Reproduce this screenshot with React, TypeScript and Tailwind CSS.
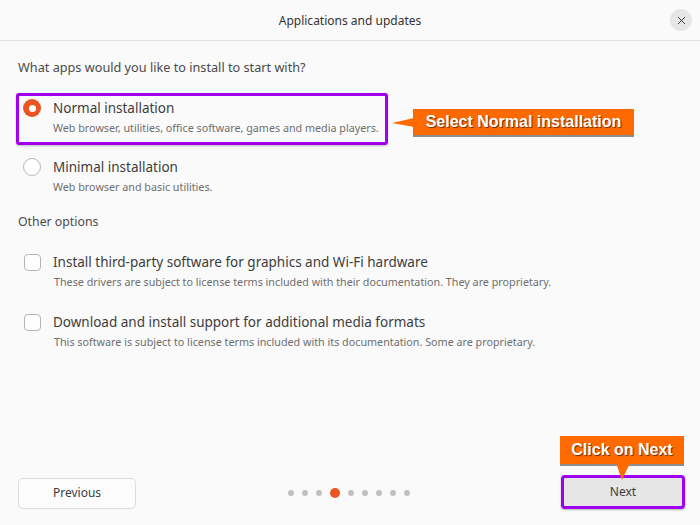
import React from 'react';
import { X } from 'lucide-react';

const PURPLE = 'border-[#a100f0]';

const Radio: React.FC<{ checked?: boolean }> = ({ checked }) => (
  <span
    className={
      checked
        ? 'flex h-[18px] w-[18px] shrink-0 items-center justify-center rounded-full bg-[#e95420]'
        : 'flex h-[18px] w-[18px] shrink-0 items-center justify-center rounded-full border border-[#b8b8b8] bg-white'
    }
  >
    {checked && <span className="h-[7px] w-[7px] rounded-full bg-white" />}
  </span>
);

const Checkbox: React.FC = () => (
  <span className="h-[17px] w-[17px] shrink-0 rounded-[4px] border border-[#b5b5b5] bg-white" />
);

const Option: React.FC<{ control: React.ReactNode; title: string; desc: string }> = ({ control, title, desc }) => (
  <div>
    <div className="flex h-[20px] items-center gap-[12px]">
      {control}
      <span className="text-[13.5px] text-[#3d3d3d]">{title}</span>
    </div>
    <div className="pl-[30px] text-[10.75px] leading-[20px] text-[#6e6e6e]">{desc}</div>
  </div>
);

// orange annotation label
const Callout: React.FC<{ text: string; className: string }> = ({ text, className }) => (
  <div
    className={`absolute flex items-center justify-center bg-[#ff6a00] font-['Liberation_Sans',Arial,sans-serif] text-[16px] font-bold text-white shadow-[0_2px_0_#8c8c8c] [text-shadow:1px_1px_1px_#6b2c00] ${className}`}
  >
    {text}
  </div>
);

const dots = [0, 1, 2, 3, 4, 5, 6, 7, 8];

export default function App() {
  return (
    <div className="relative flex h-[525px] w-[700px] flex-col overflow-hidden bg-[#fafafa] font-['Noto_Sans',sans-serif]">
      {/* Header */}
      <div className="grid h-[41px] shrink-0 grid-cols-[1fr_auto_1fr] items-center border-b border-[#e2e2e2]">
        <div />
        <div className="pt-[2px] text-[12px] text-[#333]">Applications and updates</div>
        <div className="flex justify-end pr-[8px]">
          <button className="flex h-[22px] w-[22px] items-center justify-center rounded-full bg-[#e6e6e6] text-[#333]">
            <X size={13} strokeWidth={1.75} />
          </button>
        </div>
      </div>

      {/* Content */}
      <div className="flex flex-col px-[16px] pt-[16px]">
        <div className="pl-[2px] text-[12.7px] leading-[20px] text-[#4a4a4a]">What apps would you like to install to start with?</div>

        <div className={`mt-[16px] w-[372px] rounded-[3px] border-[3px] ${PURPLE} pb-[4px] pl-[4px] pt-[2px] shadow-[0_1px_2px_rgba(0,0,0,0.25)]`}>
          <Option
            control={<Radio checked />}
            title="Normal installation"
            desc="Web browser, utilities, office software, games and media players."
          />
        </div>

        <div className="mt-[12px] pl-[7px]">
          <Option control={<Radio />} title="Minimal installation" desc="Web browser and basic utilities." />
        </div>

        <div className="mt-[15px] pl-[2px] text-[12.3px] leading-[20px] text-[#4a4a4a]">Other options</div>

        <div className="mt-[20px] pl-[8px]">
          <Option
            control={<Checkbox />}
            title="Install third-party software for graphics and Wi-Fi hardware"
            desc="These drivers are subject to license terms included with their documentation. They are proprietary."
          />
        </div>

        <div className="mt-[20px] pl-[8px]">
          <Option
            control={<Checkbox />}
            title="Download and install support for additional media formats"
            desc="This software is subject to license terms included with its documentation. Some are proprietary."
          />
        </div>
      </div>

      <div className="flex-1" />

      {/* Footer */}
      <div className="flex items-center justify-between pb-[16px] pl-[18px] pr-[15px]">
        <button className="mt-[2px] h-[31px] w-[118px] rounded-[5px] border border-[#dcdcdc] bg-[#fcfcfc] text-[12px] text-[#3d3d3d]">
          Previous
        </button>
        <div className="mt-[2px] flex items-center gap-[8px]">
          {dots.map((d) =>
            d === 3 ? (
              <span key={d} className="h-[10px] w-[10px] rounded-full bg-[#e95420]" />
            ) : (
              <span key={d} className="h-[6px] w-[6px] rounded-full bg-[#c0c0c0]" />
            )
          )}
        </div>
        <button className={`h-[34px] w-[124px] rounded-[4px] border-[3px] ${PURPLE} bg-[#e6e6e6] text-[12px] text-[#3d3d3d] shadow-[0_1px_2px_rgba(0,0,0,0.3)]`}>
          Next
        </button>
      </div>

      {/* Annotations */}
      <svg className="absolute left-[390px] top-[114px]" width="24" height="18" viewBox="0 0 24 18">
        <polygon points="24,4 2,9 24,13" fill="#ff6a00" />
      </svg>
      <Callout text="Select Normal installation" className="left-[413px] top-[109px] h-[26px] w-[221px]" />

      <Callout text="Click on Next" className="left-[560px] top-[436px] h-[28px] w-[124px]" />
      <svg className="absolute left-[614px] top-[463px]" width="18" height="18" viewBox="0 0 18 18">
        <polygon points="2,0 16,0 8,17" fill="#ff6a00" />
      </svg>
    </div>
  );
}
